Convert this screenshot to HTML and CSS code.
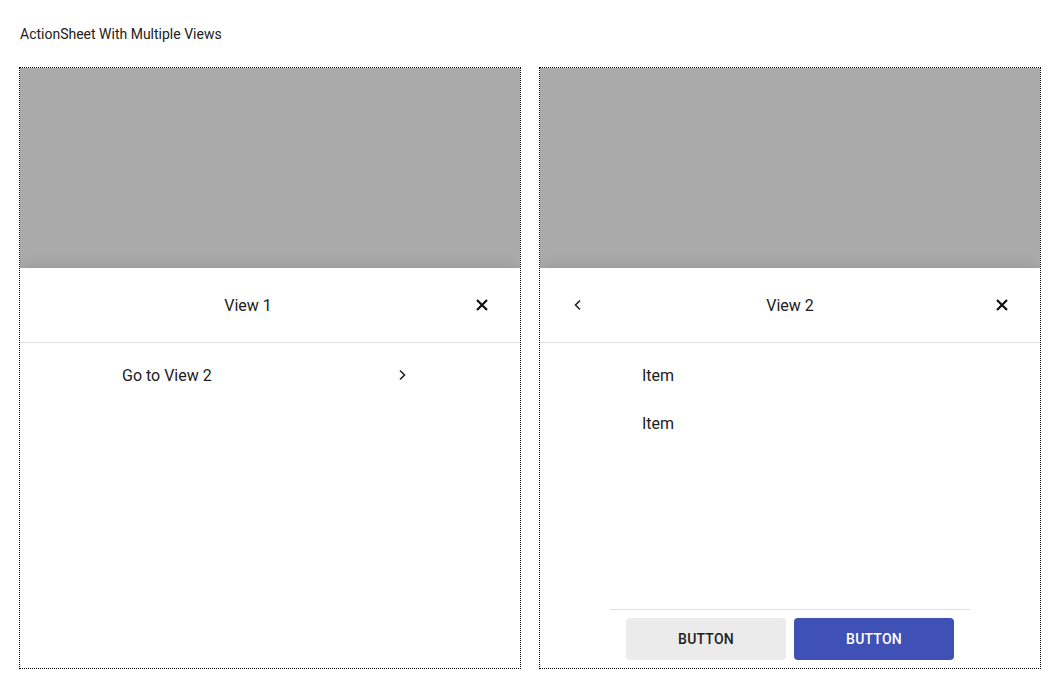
FILE: index.html
```html
<!DOCTYPE html>
<html>
<head>
<meta charset="utf-8">
<link rel="stylesheet" href="styles.css">
</head>
<body>
<div class="page">
  <div class="page-title">ActionSheet With Multiple Views</div>
  <div class="demos">
    <div class="frame">
      <div class="backdrop"></div>
      <div class="sheet">
        <div class="sheet-header">
          <div class="sheet-title">View 1</div>
          <button class="icon-btn" aria-label="close">
            <svg width="24" height="24" viewBox="0 0 24 24"><path d="M7 7L17 17M17 7L7 17" stroke="#111" stroke-width="2.2" fill="none"/></svg>
          </button>
        </div>
        <div class="sheet-body">
          <div class="list">
            <div class="list-item">
              <span>Go to View 2</span>
              <svg class="chev" width="24" height="24" viewBox="0 0 24 24"><path d="M10 7.5L14.5 12L10 16.5" stroke="#222" stroke-width="1.6" fill="none"/></svg>
            </div>
          </div>
        </div>
      </div>
    </div>
    <div class="frame">
      <div class="backdrop"></div>
      <div class="sheet">
        <div class="sheet-header">
          <button class="icon-btn" aria-label="back">
            <svg width="24" height="24" viewBox="0 0 24 24"><path d="M14 7.5L9.5 12L14 16.5" stroke="#222" stroke-width="1.6" fill="none"/></svg>
          </button>
          <div class="sheet-title">View 2</div>
          <button class="icon-btn" aria-label="close">
            <svg width="24" height="24" viewBox="0 0 24 24"><path d="M7 7L17 17M17 7L7 17" stroke="#111" stroke-width="2.2" fill="none"/></svg>
          </button>
        </div>
        <div class="sheet-body">
          <div class="list">
            <div class="list-item"><span>Item</span></div>
            <div class="list-item"><span>Item</span></div>
          </div>
        </div>
        <div class="sheet-footer">
          <button class="btn btn-secondary">Button</button>
          <button class="btn btn-primary">Button</button>
        </div>
      </div>
    </div>
  </div>
</div>
</body>
</html>
```
FILE: styles.css
```css
* { box-sizing: border-box; }
html, body { margin: 0; padding: 0; background: #fff; }
body { font-family: Roboto, "Liberation Sans", sans-serif; color: #212121; }
.page { padding: 20px 19px; }
.page-title { font-size: 14px; line-height: 28px; margin: 0 0 19px 1px; color: #212121; }
.demos { display: flex; gap: 18px; }
.frame {
  width: 502px; height: 602px;
  border: 1px dotted #000;
  display: flex; flex-direction: column;
  overflow: hidden;
}
.backdrop { height: 200px; background: #aaaaaa; flex: none; }
.sheet {
  flex: 1; background: #fff;
  display: flex; flex-direction: column;
  box-shadow: 0 0 14px rgba(0,0,0,0.14);
  position: relative;
}
.sheet-header {
  height: 75px; flex: none;
  display: flex; align-items: center;
  padding: 0 16px;
  border-bottom: 1px solid #e0e0e0;
}
.sheet-title { flex: 1; text-align: center; font-size: 16px; color: #212121; }
.icon-btn {
  width: 44px; height: 44px; border: 0; background: none; padding: 0;
  display: flex; align-items: center; justify-content: center; flex: none;
}
.sheet-body { flex: 1; padding-top: 8px; }
.list { width: 300px; margin: 0 auto; }
.list-item {
  height: 48px; display: flex; align-items: center; justify-content: space-between;
  padding: 0 6px 0 2px; font-size: 16px; color: #212121;
}
.sheet-footer {
  width: 360px; margin: 0 auto; flex: none;
  border-top: 1px solid #e0e0e0;
  padding: 8px 16px;
  display: flex; gap: 8px;
}
.btn {
  width: 160px; height: 42px; border: 0; border-radius: 4px;
  font-family: Roboto, "Liberation Sans", sans-serif;
  font-size: 14px; font-weight: 500; text-transform: uppercase; letter-spacing: 0.2px;
}
.btn-secondary { background: #ebebeb; color: #212121; }
.btn-primary { background: #3f51b5; color: #fff; }
```
